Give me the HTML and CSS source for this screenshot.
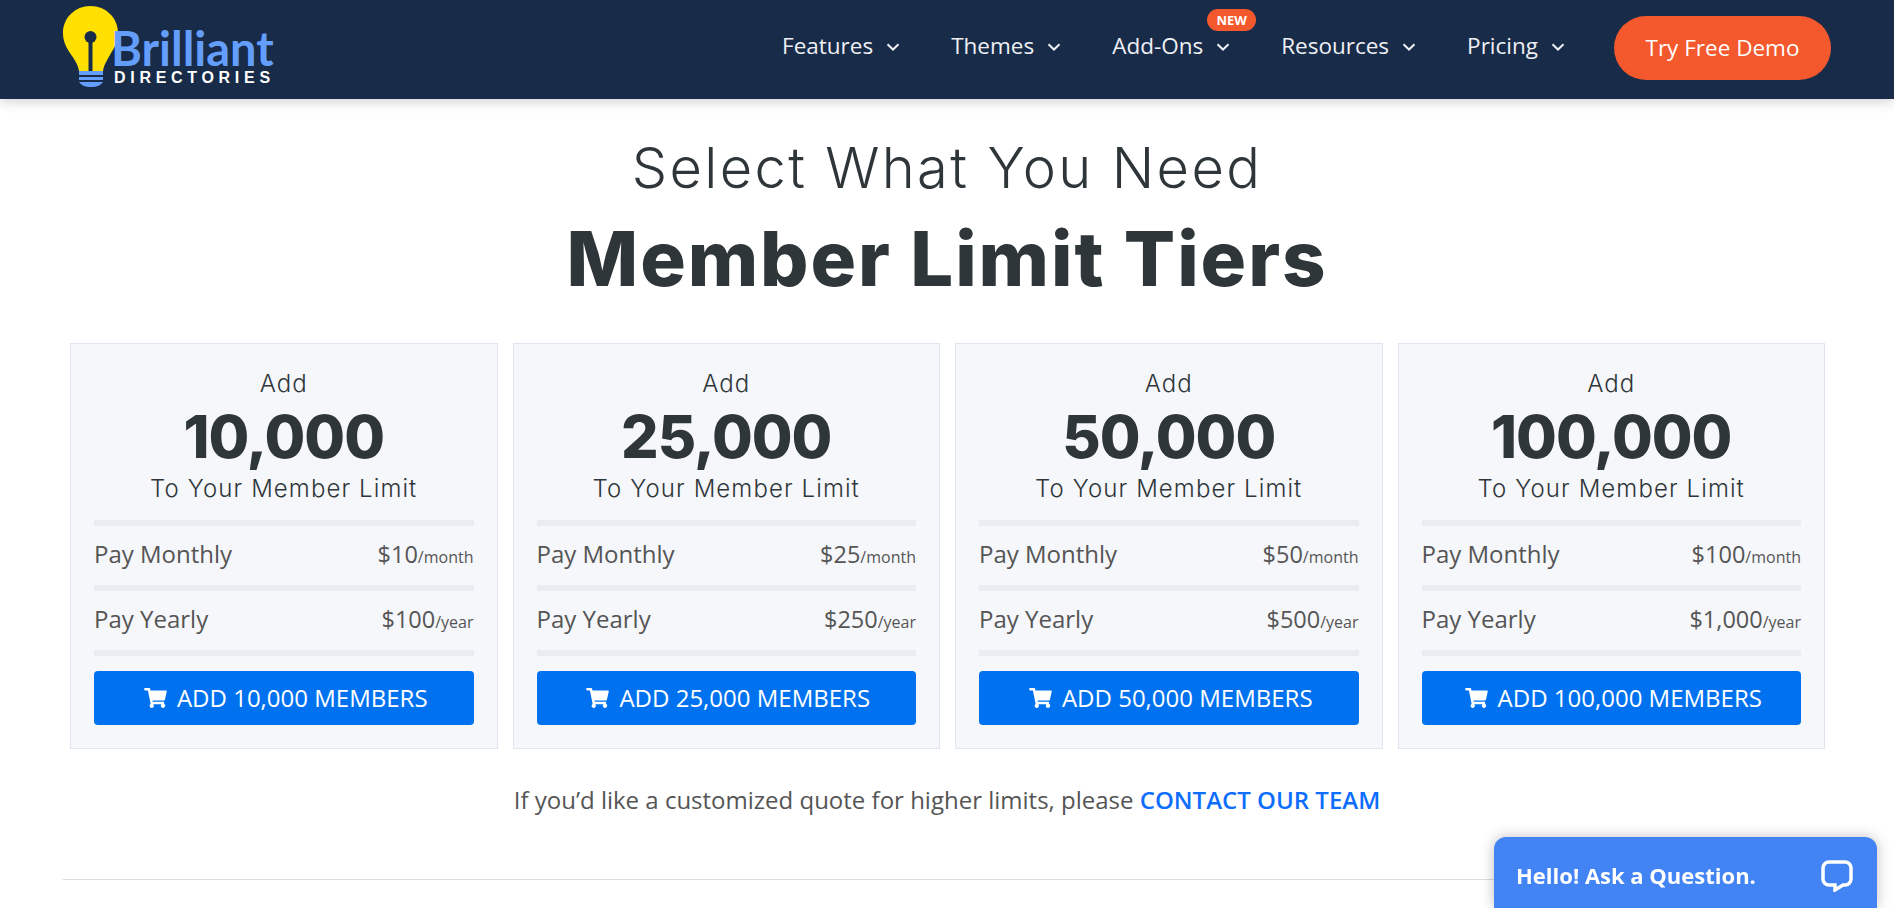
FILE: index.html
```html
<!DOCTYPE html>
<html lang="en">
<head>
    <meta charset="UTF-8">
    <title>Member Limit Tiers</title>
    <link rel="stylesheet" href="styles.css">
</head>
<body>
    <!-- Top nav -->
    <header class="topbar">
        <a href="#" class="logo">
            <svg class="logo-bulb" viewBox="0 0 55 81" width="55" height="81">
                <path d="M27.5 0C12 0 0 12 0 27c0 8 3 14 7 20 4 6 8 11 9 18h24c1-7 5-12 8-18 4-6 7-12 7-20C55 12 43 0 27.5 0z" fill="#ffe000"/>
                <circle cx="27.5" cy="31" r="6" fill="#182b49"/>
                <rect x="25.5" y="31" width="4" height="34" fill="#182b49"/>
                <rect x="16" y="65" width="24" height="4" fill="#649efc"/>
                <rect x="16" y="71" width="24" height="3" fill="#649efc"/>
                <path d="M16 76h24c-2 3-6 5-12 5s-10-2-12-5z" fill="#649efc"/>
            </svg>
            <span class="logo-text">
                <span class="logo-name">Brilliant</span>
                <span class="logo-sub">DIRECTORIES</span>
            </span>
        </a>
        <nav class="menu">
            <a href="#" class="menu-item">Features <svg class="chev" viewBox="0 0 14 8"><path d="M1.5 1.2 7 6.5l5.5-5.3"/></svg></a>
            <a href="#" class="menu-item">Themes <svg class="chev" viewBox="0 0 14 8"><path d="M1.5 1.2 7 6.5l5.5-5.3"/></svg></a>
            <a href="#" class="menu-item has-badge">Add-Ons <svg class="chev" viewBox="0 0 14 8"><path d="M1.5 1.2 7 6.5l5.5-5.3"/></svg><span class="badge">NEW</span></a>
            <a href="#" class="menu-item">Resources <svg class="chev" viewBox="0 0 14 8"><path d="M1.5 1.2 7 6.5l5.5-5.3"/></svg></a>
            <a href="#" class="menu-item">Pricing <svg class="chev" viewBox="0 0 14 8"><path d="M1.5 1.2 7 6.5l5.5-5.3"/></svg></a>
            <a href="#" class="demo-btn">Try Free Demo</a>
        </nav>
    </header>

    <main class="content">
        <h2 class="sub-title">Select What You Need</h2>
        <h1 class="main-title">Member Limit Tiers</h1>

        <div class="tiers">
            <div class="tier">
                <div class="tier-add">Add</div>
                <div class="tier-num">10,000</div>
                <div class="tier-limit">To Your Member Limit</div>
                <div class="price-row"><span>Pay Monthly</span><span class="price">$10<small>/month</small></span></div>
                <div class="price-row"><span>Pay Yearly</span><span class="price">$100<small>/year</small></span></div>
                <a href="#" class="add-btn"><svg class="cart" viewBox="0 0 576 512"><path d="M528.12 301.319l47.273-208C578.806 78.301 567.391 64 551.99 64H159.208l-9.166-44.81C147.758 8.021 137.93 0 126.529 0H24C10.745 0 0 10.745 0 24v16c0 13.255 10.745 24 24 24h69.883l70.248 343.435C147.325 417.1 136 435.222 136 456c0 30.928 25.072 56 56 56s56-25.072 56-56c0-15.674-6.447-29.835-16.824-40h209.647C430.447 426.165 424 440.326 424 456c0 30.928 25.072 56 56 56s56-25.072 56-56c0-22.172-12.888-41.332-31.579-50.405l5.517-24.276c3.413-15.018-8.002-29.319-23.403-29.319H218.117l-6.545-32h293.145c11.206 0 20.92-7.754 23.403-18.681z"/></svg>ADD 10,000 MEMBERS</a>
            </div>
            <div class="tier">
                <div class="tier-add">Add</div>
                <div class="tier-num">25,000</div>
                <div class="tier-limit">To Your Member Limit</div>
                <div class="price-row"><span>Pay Monthly</span><span class="price">$25<small>/month</small></span></div>
                <div class="price-row"><span>Pay Yearly</span><span class="price">$250<small>/year</small></span></div>
                <a href="#" class="add-btn"><svg class="cart" viewBox="0 0 576 512"><path d="M528.12 301.319l47.273-208C578.806 78.301 567.391 64 551.99 64H159.208l-9.166-44.81C147.758 8.021 137.93 0 126.529 0H24C10.745 0 0 10.745 0 24v16c0 13.255 10.745 24 24 24h69.883l70.248 343.435C147.325 417.1 136 435.222 136 456c0 30.928 25.072 56 56 56s56-25.072 56-56c0-15.674-6.447-29.835-16.824-40h209.647C430.447 426.165 424 440.326 424 456c0 30.928 25.072 56 56 56s56-25.072 56-56c0-22.172-12.888-41.332-31.579-50.405l5.517-24.276c3.413-15.018-8.002-29.319-23.403-29.319H218.117l-6.545-32h293.145c11.206 0 20.92-7.754 23.403-18.681z"/></svg>ADD 25,000 MEMBERS</a>
            </div>
            <div class="tier">
                <div class="tier-add">Add</div>
                <div class="tier-num">50,000</div>
                <div class="tier-limit">To Your Member Limit</div>
                <div class="price-row"><span>Pay Monthly</span><span class="price">$50<small>/month</small></span></div>
                <div class="price-row"><span>Pay Yearly</span><span class="price">$500<small>/year</small></span></div>
                <a href="#" class="add-btn"><svg class="cart" viewBox="0 0 576 512"><path d="M528.12 301.319l47.273-208C578.806 78.301 567.391 64 551.99 64H159.208l-9.166-44.81C147.758 8.021 137.93 0 126.529 0H24C10.745 0 0 10.745 0 24v16c0 13.255 10.745 24 24 24h69.883l70.248 343.435C147.325 417.1 136 435.222 136 456c0 30.928 25.072 56 56 56s56-25.072 56-56c0-15.674-6.447-29.835-16.824-40h209.647C430.447 426.165 424 440.326 424 456c0 30.928 25.072 56 56 56s56-25.072 56-56c0-22.172-12.888-41.332-31.579-50.405l5.517-24.276c3.413-15.018-8.002-29.319-23.403-29.319H218.117l-6.545-32h293.145c11.206 0 20.92-7.754 23.403-18.681z"/></svg>ADD 50,000 MEMBERS</a>
            </div>
            <div class="tier">
                <div class="tier-add">Add</div>
                <div class="tier-num">100,000</div>
                <div class="tier-limit">To Your Member Limit</div>
                <div class="price-row"><span>Pay Monthly</span><span class="price">$100<small>/month</small></span></div>
                <div class="price-row"><span>Pay Yearly</span><span class="price">$1,000<small>/year</small></span></div>
                <a href="#" class="add-btn"><svg class="cart" viewBox="0 0 576 512"><path d="M528.12 301.319l47.273-208C578.806 78.301 567.391 64 551.99 64H159.208l-9.166-44.81C147.758 8.021 137.93 0 126.529 0H24C10.745 0 0 10.745 0 24v16c0 13.255 10.745 24 24 24h69.883l70.248 343.435C147.325 417.1 136 435.222 136 456c0 30.928 25.072 56 56 56s56-25.072 56-56c0-15.674-6.447-29.835-16.824-40h209.647C430.447 426.165 424 440.326 424 456c0 30.928 25.072 56 56 56s56-25.072 56-56c0-22.172-12.888-41.332-31.579-50.405l5.517-24.276c3.413-15.018-8.002-29.319-23.403-29.319H218.117l-6.545-32h293.145c11.206 0 20.92-7.754 23.403-18.681z"/></svg>ADD 100,000 MEMBERS</a>
            </div>
        </div>

        <p class="quote">If you’d like a customized quote for higher limits, please <a href="#">CONTACT OUR TEAM</a></p>
        <hr class="divider">
    </main>

    <!-- Chat widget -->
    <div class="chat">
        <span class="chat-text">Hello! Ask a Question.</span>
        <svg class="chat-icon" viewBox="0 0 32 32"><path d="M8 2h16a6 6 0 0 1 6 6v11a6 6 0 0 1-6 6h-2l-8 5v-5H8a6 6 0 0 1-6-6V8a6 6 0 0 1 6-6z"/></svg>
    </div>
</body>
</html>
```

FILE: styles.css
```css
html, body {
    height: 100%;
    overflow: hidden;
}

body {
    margin: 0;
    font-family: "Open Sans", sans-serif;
    background-color: #fff;
    color: #555;
}

a {
    text-decoration: none;
}

.topbar {
    height: 96px;
    background-color: #182b49;
    box-shadow: 0 2px 12px rgba(0, 0, 0, 0.2);
    display: flex;
    align-items: center;
    justify-content: space-between;
    padding: 0 63px 3px;
}

.logo {
    display: flex;
    align-items: flex-start;
    height: 81px;
    margin-top: -3px;
}

.logo-text {
    display: flex;
    flex-direction: column;
    margin-left: -7px;
    padding-top: 21px;
}

.logo-name {
    font-family: "Lato", sans-serif;
    font-weight: 700;
    font-size: 47px;
    line-height: 42px;
    color: #649efc;
}

.logo-sub {
    margin: 1px 0 0 3px;
    font-family: "Liberation Sans", sans-serif;
    font-weight: 700;
    font-size: 16px;
    line-height: 15px;
    letter-spacing: 4.7px;
    color: #fff;
}

.menu {
    display: flex;
    align-items: center;
}

.menu-item {
    position: relative;
    display: flex;
    align-items: center;
    gap: 13px;
    margin-right: 51px;
    padding-bottom: 5px;
    font-size: 22.5px;
    color: #eef0f4;
}

.chev {
    width: 14px;
    height: 8px;
    margin-top: 2px;
    fill: none;
    stroke: #eef0f4;
    stroke-width: 2;
}

.badge {
    position: absolute;
    top: -21px;
    right: -26px;
    width: 49px;
    height: 22px;
    border-radius: 11px;
    background-color: #f4582d;
    color: #fff;
    font-size: 13px;
    font-weight: 700;
    line-height: 22px;
    text-align: center;
}

.demo-btn {
    width: 217px;
    height: 64px;
    margin-left: -2px;
    border-radius: 32px;
    background-color: #f4582d;
    color: #fff;
    font-size: 22.5px;
    line-height: 64px;
    text-align: center;
}

.content {
    padding: 30px 63px 0;
}

.sub-title {
    margin: 0;
    font-family: "Inter", sans-serif;
    font-weight: 300;
    font-size: 56px;
    line-height: 78px;
    letter-spacing: 2.35px;
    text-align: center;
    color: #2f3639;
}

.main-title {
    margin: 1px 0 -1px;
    font-family: "Inter", sans-serif;
    font-weight: 800;
    font-size: 76px;
    line-height: 100px;
    letter-spacing: 1.9px;
    text-align: center;
    color: #2f3639;
}

.tiers {
    display: grid;
    grid-template-columns: repeat(4, 1fr);
    gap: 15px;
    margin: 36px 6px 0 7px;
}

.tier {
    height: 406px;
    box-sizing: border-box;
    border: 1px solid #dfe6f0;
    background-color: #f5f7fb;
    padding: 24px 23px 0;
    text-align: center;
}

.tier-add,
.tier-limit {
    font-family: "Inter", sans-serif;
    font-weight: 300;
    font-size: 24px;
    letter-spacing: 1.1px;
    line-height: 32px;
    color: #2f3639;
}

.tier-num {
    margin-top: 1px;
    font-family: "Inter", sans-serif;
    font-weight: 800;
    font-size: 59px;
    line-height: 72px;
    letter-spacing: -1px;
    color: #2f3639;
}

.tier-limit {
    margin-bottom: 15px;
}

.price-row {
    display: flex;
    justify-content: space-between;
    align-items: center;
    height: 55px;
    padding-bottom: 4px;
    border-top: 6px solid #e9edf3;
    font-size: 24px;
}

.price-row:last-of-type {
    border-bottom: 6px solid #e9edf3;
}

.price {
    font-size: 23.5px;
}

.price small {
    font-size: 16px;
}

.add-btn {
    display: flex;
    align-items: center;
    justify-content: center;
    box-sizing: border-box;
    height: 54px;
    margin-top: 15px;
    padding: 0 0 1px 4px;
    border-radius: 4px;
    background-color: #0072f0;
    color: #fff;
    font-size: 24px;
}

.cart {
    width: 23px;
    height: 20px;
    margin: 1px 10px 0 0;
    fill: #fff;
}

.quote {
    margin: 31px 0 0;
    font-size: 24px;
    line-height: 40px;
    text-align: center;
}

.quote a {
    color: #0d6efd;
    font-weight: 600;
}

.divider {
    border: none;
    border-top: 1px solid #dddddd;
    margin: 59px 0 0;
}

.chat {
    position: fixed;
    left: 1494px;
    right: 17px;
    top: 837px;
    bottom: 0;
    box-sizing: border-box;
    padding: 23px 24px 0 22px;
    display: flex;
    justify-content: space-between;
    align-items: flex-start;
    border-radius: 12px 12px 0 0;
    background-color: #4384f5;
    box-shadow: 0 0 14px rgba(0, 0, 0, 0.25);
}

.chat-text {
    color: #fff;
    font-size: 22px;
    font-weight: 700;
    line-height: 30px;
}

.chat-icon {
    width: 32px;
    height: 32px;
    fill: none;
    stroke: #fff;
    stroke-width: 3.5;
}
```
